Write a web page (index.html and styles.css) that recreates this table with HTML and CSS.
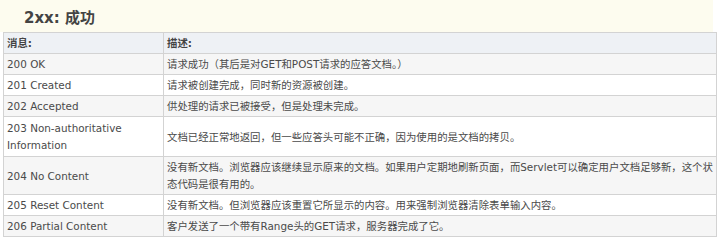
FILE: index.html
```html
<!DOCTYPE html>
<html lang="zh">
<head>
<meta charset="utf-8">
<link rel="stylesheet" href="styles.css">
</head>
<body>
<div class="title-bar"><h2 class="title">2xx: 成功</h2></div>
<table class="codes">
  <thead>
    <tr><th class="c1">消息:</th><th>描述:</th></tr>
  </thead>
  <tbody>
    <tr class="alt"><td>200 OK</td><td>请求成功（其后是对GET和POST请求的应答文档。）</td></tr>
    <tr><td>201 Created</td><td>请求被创建完成，同时新的资源被创建。</td></tr>
    <tr class="alt"><td>202 Accepted</td><td>供处理的请求已被接受，但是处理未完成。</td></tr>
    <tr class="tall"><td>203 Non-authoritative Information</td><td>文档已经正常地返回，但一些应答头可能不正确，因为使用的是文档的拷贝。</td></tr>
    <tr class="alt"><td>204 No Content</td><td>没有新文档。浏览器应该继续显示原来的文档。如果用户定期地刷新页面，而Servlet可以确定用户文档足够新，这个状态代码是很有用的。</td></tr>
    <tr><td>205 Reset Content</td><td>没有新文档。但浏览器应该重置它所显示的内容。用来强制浏览器清除表单输入内容。</td></tr>
    <tr class="alt"><td>206 Partial Content</td><td>客户发送了一个带有Range头的GET请求，服务器完成了它。</td></tr>
  </tbody>
</table>
</body>
</html>
```
FILE: styles.css
```css
html, body {
  margin: 0;
  padding: 0;
  background: #ffffff;
}
body {
  width: 720px;
  height: 240px;
  overflow: hidden;
  font-family: "DejaVu Sans", "Noto Sans CJK SC", sans-serif;
  color: #4a4a4a;
}
.title-bar {
  background: #fdfcef;
  width: 713px;
  height: 32px;
  display: flex;
  align-items: center;
}
.title {
  margin: 0 0 0 24px;
  font-size: 15px;
  font-weight: bold;
  color: #444;
  font-family: "DejaVu Sans", "Noto Sans CJK SC", sans-serif;
}
.codes {
  margin-left: 3px;
  width: 714px;
  border-collapse: collapse;
  font-size: 10.4px;
  line-height: 17px;
}
.codes th, .codes td {
  border: 1px solid #d3d3d3;
  padding: 2px 3px 1px 3px;
  text-align: left;
  vertical-align: middle;
}
.codes th {
  background: #eef1f5;
  font-weight: bold;
  color: #444;
}
.codes .c1 {
  width: 153px;
}
.codes tr.alt td {
  background: #f6f6f6;
}
.codes tr.tall td {
  padding-top: 3px;
  padding-bottom: 2px;
}
```
